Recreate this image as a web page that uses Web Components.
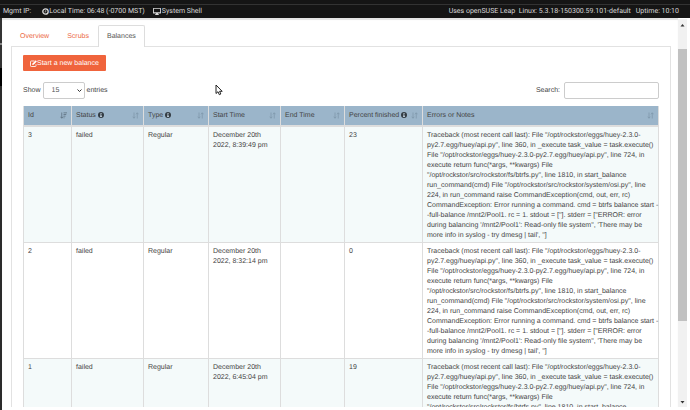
<!DOCTYPE html>
<html lang="en">
<head>
<meta charset="utf-8">
<meta name="viewport" content="width=device-width, initial-scale=1">
<title>Rockstor - Balances</title>
<style>
  html, body { margin: 0; height: 100%; overflow: hidden; background: #fff; }
  body {
    font: 7px/10px "Liberation Sans", Arial, sans-serif;
    color: #444;
    text-rendering: geometricPrecision;
  }
</style>
</head>
<body>
<rock-app>
  <top-bar slot="top"></top-bar>
  <tab-panel>
    <balance-tools></balance-tools>
    <balance-table></balance-table>
  </tab-panel>
</rock-app>
<mouse-pointer></mouse-pointer>

<script>
const ICONS = {
  clock: `<svg viewBox="0 0 14 14"><circle cx="7" cy="7" r="5.4" fill="none" stroke="currentColor" stroke-width="2.6"/><path d="M7.5 4V8H5" fill="none" stroke="currentColor" stroke-width="1.2"/></svg>`,
  desktop: `<svg viewBox="0 0 16 14"><path fill="currentColor" fill-rule="evenodd" d="M1 0h14a1 1 0 0 1 1 1v9a1 1 0 0 1-1 1h-5v1.5h2V14H4v-1.5h2V11H1a1 1 0 0 1-1-1V1a1 1 0 0 1 1-1zm.8 1.7v6.6h12.4V1.7z"/></svg>`,
  edit: `<svg viewBox="0 0 14 14"><path d="M9 2H2.5A1.5 1.5 0 0 0 1 3.5v8A1.5 1.5 0 0 0 2.5 13h8a1.5 1.5 0 0 0 1.5-1.5V8.5" fill="none" stroke="currentColor" stroke-width="1.7"/><path d="M5 7l6.5-6.5 2.3 2.3-6.5 6.5-3 .8z" fill="currentColor"/></svg>`,
  info: `<svg viewBox="0 0 14 14"><circle cx="7" cy="7" r="7" fill="#333c44"/><path d="M5.8 2.5h2.5v2H5.8zM4.7 5.7h3.6v4.4h1.1v1.6H4.7v-1.6h1.1V7.3H4.7z" fill="#c4d4e0"/></svg>`,
  sort: `<svg viewBox="0 0 14 14"><path d="M4 1v11M1.5 9.5L4 12.5l2.5-3M10.5 13V2M8 4.5l2.5-3 2.5 3" fill="none" stroke="currentColor" stroke-width="1.5"/></svg>`,
  desc: `<svg viewBox="0 0 14 14"><path d="M3.5 1v11M1 9.5l2.5 3 2.5-3M7 1.7h7M7 5h5.5M7 8.3h4M7 11.6h2" fill="none" stroke="currentColor" stroke-width="1.5"/></svg>`
};

class RockIcon extends HTMLElement {
  connectedCallback() {
    this.attachShadow({ mode: "open" }).innerHTML = /* html */`
    <style>
      :host { display: inline-block; width: 7px; height: 7px; flex: none; }
      :host([name="info"]) { width: 6px; height: 6px; }
      svg { display: block; width: 100%; height: 100%; }
    </style>
    ${ICONS[this.getAttribute("name")]}`;
  }
}

class RockApp extends HTMLElement {
  constructor() {
    super();
    this.attachShadow({ mode: "open" }).innerHTML = /* html */`
    <style>
      :host { display: flex; flex-direction: column; height: 100vh; }
      .body { flex: 1; min-height: 0; display: flex; }
      .edge {
        width: 2px;
        background: linear-gradient(#333 25px, #888 25px 27px, #333 27px 50px, #000 50px 68px, #2b2b2b 68px);
      }
      main {
        flex: 1;
        min-width: 0;
        overflow: hidden;
        margin-bottom: 3px;
        padding: 7px 7px 0 9px;
        box-sizing: border-box;
        box-shadow: inset 0 2px 1px #e4e4e4;
      }
      scroll-track { margin: 1px 3px 3px 0; }
    </style>
    <slot name="top"></slot>
    <div class="body">
      <div class="edge"></div>
      <main><slot></slot></main>
      <scroll-track></scroll-track>
    </div>`;
  }
}

class TopBar extends HTMLElement {
  constructor() {
    super();
    this.attachShadow({ mode: "open" }).innerHTML = /* html */`
    <style>
      :host {
        display: block;
        background: #151515;
        color: #d8d8d8;
        font: 7px/13px Roboto, sans-serif;
        padding-top: 4px;
      }
      .line {
        display: flex;
        align-items: center;
        border-top: 1px solid #333;
        padding: 0 11px 0 3px;
        white-space: nowrap;
      }
      .item { display: flex; align-items: center; }
      .time { margin-left: 11px; }
      .shell { margin-left: 8px; gap: 1px; color: inherit; text-decoration: none; }
      .shell rock-icon { width: 8px; }
      .system { margin-left: auto; }
      .uptime { margin-left: 5px; }
    </style>
    <div class="line">
      <span>Mgmt IP:</span>
      <span class="item time"><rock-icon name="clock"></rock-icon>Local Time: 06:48 (-0700 MST)</span>
      <a class="item shell" href="#shell"><rock-icon name="desktop"></rock-icon>System Shell</a>
      <span class="system">Uses openSUSE Leap&nbsp; Linux: 5.3.18-150300.59.101-default</span>
      <span class="uptime">Uptime: 10:10</span>
    </div>`;
  }
}

class ScrollTrack extends HTMLElement {
  constructor() {
    super();
    this.attachShadow({ mode: "open" }).innerHTML = /* html */`
    <style>
      :host { display: flex; flex-direction: column; width: 9px; background: #f1f1f1; }
      svg { display: block; width: 9px; height: 11px; }
      .rail { flex: 1; display: flex; flex-direction: column; }
      .before { flex: 19; }
      .thumb { flex: 272; background: #c1c1c1; }
      .after { flex: 75; }
    </style>
    <svg viewBox="0 0 9 11"><path d="M2.5 7.5L4.5 5l2 2.5z" fill="#333"/></svg>
    <div class="rail"><div class="before"></div><div class="thumb"></div><div class="after"></div></div>
    <svg viewBox="0 0 9 11"><path d="M2.5 5l2 2.5 2-2.5z" fill="#333"/></svg>`;
  }
}

class TabPanel extends HTMLElement {
  constructor() {
    super();
    this.attachShadow({ mode: "open" }).innerHTML = /* html */`
    <style>
      :host { display: block; }
      nav { display: flex; }
      a {
        border: 1px solid transparent;
        border-bottom: 0;
        border-radius: 2px 2px 0 0;
        padding: 6px 8px 4px;
        color: #ec6a44;
        text-decoration: none;
      }
      a.active {
        position: relative;
        background: #fff;
        border-color: #ddd;
        color: #555;
        margin-bottom: -1px;
        padding-bottom: 5px;
      }
      section { border: 1px solid #e2e2e2; padding: 8px 11px; }
    </style>
    <nav>
      <a href="#overview">Overview</a>
      <a href="#scrubs">Scrubs</a>
      <a href="#balances" class="active" aria-current="page">Balances</a>
    </nav>
    <section><slot></slot></section>`;
  }
}

class BalanceTools extends HTMLElement {
  constructor() {
    super();
    this.attachShadow({ mode: "open" }).innerHTML = /* html */`
    <style>
      :host { display: block; }
      button, select, input { font: inherit; text-rendering: inherit; box-sizing: border-box; }
      button {
        display: flex;
        align-items: center;
        height: 16px;
        padding: 2px 7px 0;
        border: 0;
        border-radius: 1px;
        background: #f0643c;
        color: #fff;
      }
      button rock-icon { margin-bottom: 2px; }
      .row { display: flex; justify-content: space-between; margin: 11px 0 7px; }
      .row > div { display: flex; align-items: center; }
      select, input {
        height: 17px;
        border: 1px solid #ccc;
        border-radius: 2px;
        background: #fff;
        color: #555;
      }
      .length { display: grid; align-items: center; margin: 0 2px; }
      select { grid-area: 1 / 1; appearance: none; width: 42px; padding: 0 8px; }
      .length svg {
        grid-area: 1 / 1;
        justify-self: end;
        width: 5px;
        height: 5px;
        margin-right: 3px;
        pointer-events: none;
      }
      input { width: 95px; margin-left: 4px; padding: 0 4px; }
    </style>
    <button type="button"><rock-icon name="edit"></rock-icon>Start a new balance</button>
    <div class="row">
      <div>
        <label for="length">Show</label>
        <span class="length">
          <select id="length" aria-label="Show entries"><option>15</option></select>
          <svg viewBox="0 0 10 10"><path d="M1 3l4 4 4-4" fill="none" stroke="#333" stroke-width="2"/></svg>
        </span>
        <span>entries</span>
      </div>
      <div><label for="search">Search:</label><input id="search" type="search"></div>
    </div>`;
  }
}

const COLUMNS = [
  { name: "Id", width: 48, sort: "desc" },
  { name: "Status", width: 72, info: true },
  { name: "Type", width: 65, info: true },
  { name: "Start Time", width: 72 },
  { name: "End Time", width: 64 },
  { name: "Percent finished", width: 78, info: true },
  { name: "Errors or Notes" }
];

const TRACEBACK = [
  `Traceback (most recent call last): File "/opt/rockstor/eggs/huey-2.3.0-`,
  `py2.7.egg/huey/api.py", line 360, in _execute task_value = task.execute()`,
  `File "/opt/rockstor/eggs/huey-2.3.0-py2.7.egg/huey/api.py", line 724, in`,
  `execute return func(*args, **kwargs) File`,
  `"/opt/rockstor/src/rockstor/fs/btrfs.py", line 1810, in start_balance`,
  `run_command(cmd) File "/opt/rockstor/src/rockstor/system/osi.py", line`,
  `224, in run_command raise CommandException(cmd, out, err, rc)`,
  `CommandException: Error running a command. cmd = btrfs balance start -`,
  `-full-balance /mnt2/Pool1. rc = 1. stdout = ['']. stderr = ["ERROR: error`,
  `during balancing '/mnt2/Pool1': Read-only file system", 'There may be`,
  `more info in syslog - try dmesg | tail', '']`
].join("<br>");

const BALANCES = [
  [3, "failed", "Regular", "December 20th 2022, 8:39:49 pm", "", 23, TRACEBACK],
  [2, "failed", "Regular", "December 20th 2022, 8:32:14 pm", "", 0, TRACEBACK],
  [1, "failed", "Regular", "December 20th 2022, 6:45:04 pm", "", 19, TRACEBACK]
];

class BalanceTable extends HTMLElement {
  constructor() {
    super();
    this.attachShadow({ mode: "open" });
  }

  connectedCallback() {
    const cols = COLUMNS.map(c => c.width ? `<col style="width: ${c.width}px">` : "<col>").join("");
    const heads = COLUMNS.map(c => `
      <th scope="col"><div>
        <span>${c.name}</span>
        ${c.info ? `<rock-icon name="info"></rock-icon>` : ""}
        <rock-icon class="sort ${c.sort ?? ""}" name="${c.sort ?? "sort"}"></rock-icon>
      </div></th>`).join("");
    const rows = BALANCES.map(r => `<tr>${r.map(v => `<td>${v}</td>`).join("")}</tr>`).join("");

    this.shadowRoot.innerHTML = /* html */`
    <style>
      :host { display: block; }
      table {
        width: 100%;
        table-layout: fixed;
        border-collapse: separate;
        border-spacing: 0;
        border-right: 1px solid #ddd;
      }
      th, td { border-left: 1px solid #ddd; text-align: left; vertical-align: top; }
      th {
        background: #9bb5ca;
        border-bottom: 2px solid #ddd;
        padding: 5px 4px 4px;
        font-weight: normal;
      }
      th div { display: flex; align-items: center; gap: 2px; }
      th rock-icon { margin-bottom: 2px; }
      .sort { margin-left: auto; color: #7d96aa; }
      .desc { color: #5a6c7b; }
      td { border-bottom: 1px solid #ddd; padding: 4px 4px 1px; }
      td:last-child { padding-right: 0; white-space: nowrap; }
      tbody tr:nth-child(odd) { background: #f4fafa; }
    </style>
    <table>
      <colgroup>${cols}</colgroup>
      <thead><tr>${heads}</tr></thead>
      <tbody>${rows}</tbody>
    </table>`;
  }
}

class MousePointer extends HTMLElement {
  constructor() {
    super();
    this.attachShadow({ mode: "open" }).innerHTML = /* html */`
    <style>
      :host { position: absolute; left: 215px; top: 84px; pointer-events: none; }
      svg { display: block; width: 8px; height: 12px; }
    </style>
    <svg viewBox="0 0 8 12"><path d="M1 1v8.5l2-1.8 1.3 3 1.5-.7-1.2-2.7h2.6z" fill="#fff" stroke="#222" stroke-width="1"/></svg>`;
  }
}

customElements.define("rock-icon", RockIcon);
customElements.define("scroll-track", ScrollTrack);
customElements.define("rock-app", RockApp);
customElements.define("top-bar", TopBar);
customElements.define("tab-panel", TabPanel);
customElements.define("balance-tools", BalanceTools);
customElements.define("balance-table", BalanceTable);
customElements.define("mouse-pointer", MousePointer);
</script>
</body>
</html>
